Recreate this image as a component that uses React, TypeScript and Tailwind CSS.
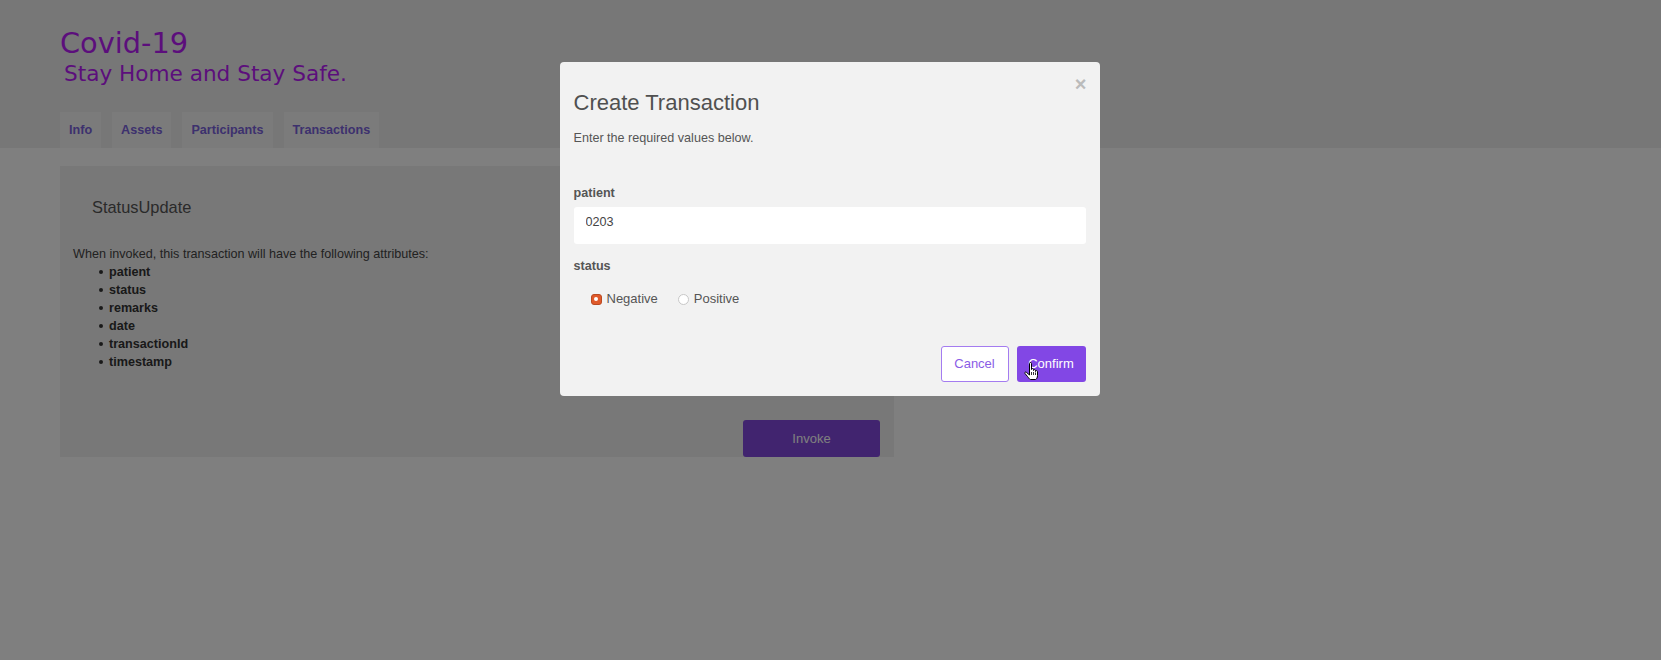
import React, { useState } from "react";

const tabs = ["Info", "Assets", "Participants", "Transactions"];
const attributes = ["patient", "status", "remarks", "date", "transactionId", "timestamp"];

const HandCursor = () => (
  <svg width="15" height="19" viewBox="0 0 15 19" fill="none" xmlns="http://www.w3.org/2000/svg">
    <path
      d="M5.5 1.5C5.5 0.9 6 0.5 6.5 0.5C7 0.5 7.5 0.9 7.5 1.5V7.5C7.5 7 8 6.6 8.5 6.6C9 6.6 9.5 7 9.5 7.5V8.5C9.5 8 10 7.6 10.5 7.6C11 7.6 11.5 8 11.5 8.5V9.5C11.5 9 12 8.6 12.5 8.6C13 8.6 13.5 9 13.5 9.5V13.5C13.5 15.5 12.5 17.5 11.5 17.5H6.5C5.5 17.5 4.5 15.5 3.5 14.5L1 11.5C0.6 11 0.8 10.3 1.3 10.1C1.8 9.9 2.3 10.1 2.6 10.5L5.5 13Z"
      fill="white"
      stroke="black"
      strokeWidth="1"
      strokeLinejoin="round"
    />
    <path d="M7.5 10V13M9.5 10V13M11.5 10.5V13" stroke="black" strokeWidth="0.8" />
  </svg>
);

const Radio = ({ checked, label, onClick }: { checked: boolean; label: string; onClick: () => void }) => (
  <label className="flex cursor-pointer items-center" onClick={onClick}>
    {checked ? (
      <span className="flex h-[11px] w-[11px] items-center justify-center rounded-[3px] border border-[#b94a22] bg-[#e05a2b]">
        <span className="h-[4px] w-[4px] rounded-full bg-white" />
      </span>
    ) : (
      <span className="h-[11px] w-[11px] rounded-full border border-[#c8c8c8] bg-white" />
    )}
    <span className="ml-[5px] text-[13px] leading-[18px] text-[#555]">{label}</span>
  </label>
);

export default function App() {
  const [status, setStatus] = useState("Negative");

  return (
    <div className="relative min-h-[660px] bg-white font-['Liberation_Sans',Arial,sans-serif]">
      {/* header */}
      <header className="flex h-[148px] flex-col bg-[#eeeeee] px-[60px] pt-[28px]">
        <h1 className="font-['DejaVu_Sans',sans-serif] text-[28.8px] leading-[30px] text-[#b81cf8]">Covid-19</h1>
        <h2 className="ml-[4px] mt-[3px] font-['DejaVu_Sans',sans-serif] text-[21.6px] leading-[26px] text-[#b81cf8]">
          Stay Home and Stay Safe.
        </h2>
        <nav className="mt-[25px] flex h-[36px] gap-[11px]">
          {tabs.map((t) => (
            <a
              key={t}
              href="#"
              className="flex h-[36px] items-center bg-[#f6f6f6] px-[9px] text-[12.6px] font-bold text-[#7a62dc]"
            >
              {t}
            </a>
          ))}
        </nav>
      </header>

      {/* transaction card */}
      <section className="ml-[60px] mt-[18px] flex h-[291px] w-[834px] flex-col bg-[#f0f0f0] px-[13px] pt-[31px]">
        <h3 className="pl-[19px] text-[16.4px] leading-[20px] text-[#555]">StatusUpdate</h3>
        <p className="mt-[28px] text-[12.6px] leading-[18px] text-[#444]">
          When invoked, this transaction will have the following attributes:
        </p>
        <ul className="text-[12.6px] font-bold leading-[18px] text-[#333]">
          {attributes.map((a) => (
            <li key={a} className="flex items-center">
              <span className="ml-[26px] mr-[6px] h-[4px] w-[4px] rounded-full bg-[#333]" />
              {a}
            </li>
          ))}
        </ul>
        <button className="mr-[1px] mt-auto h-[37px] w-[137px] self-end rounded-[3px] bg-[#8248de] text-[13px] text-white">
          Invoke
        </button>
      </section>

      {/* modal */}
      <div className="fixed inset-0 flex justify-center bg-black/50 pt-[62px]">
        <div className="relative mr-[2px] flex h-[334px] w-[540px] flex-col rounded-[4px] bg-[#f2f2f2] px-[14px] pb-[14px] pt-[28px]">
          <button className="absolute right-[10px] top-[13px] flex h-[18px] w-[18px] items-center justify-center text-[20px] font-bold leading-[18px] text-[#bbbbbb]">
            ×
          </button>
          <h2 className="text-[22px] leading-[26px] text-[#505050]">Create Transaction</h2>
          <p className="mt-[13px] text-[12.6px] leading-[18px] text-[#555]">Enter the required values below.</p>

          <label className="mt-[37px] text-[12.6px] font-bold leading-[18px] text-[#555]">patient</label>
          <input
            className="mt-[5px] h-[37px] rounded-[3px] bg-white px-[12px] pb-[7px] text-[12.6px] text-[#444] outline-none"
            defaultValue="0203"
          />

          <label className="mt-[13px] text-[12.6px] font-bold leading-[18px] text-[#555]">status</label>
          <div className="ml-[17px] mt-[15px] flex items-center gap-[20px]">
            <Radio checked={status === "Negative"} label="Negative" onClick={() => setStatus("Negative")} />
            <Radio checked={status === "Positive"} label="Positive" onClick={() => setStatus("Positive")} />
          </div>

          <div className="mt-auto flex justify-end gap-[8px]">
            <button className="h-[36px] w-[68px] rounded-[3px] border border-[#a47cf0] bg-white text-[13px] text-[#8a5ce6]">
              Cancel
            </button>
            <button className="relative h-[36px] w-[69px] rounded-[3px] bg-[#8247e5] text-[13px] text-white">
              Confirm
              <span className="absolute left-[7px] top-[16px]">
                <HandCursor />
              </span>
            </button>
          </div>
        </div>
      </div>
    </div>
  );
}
